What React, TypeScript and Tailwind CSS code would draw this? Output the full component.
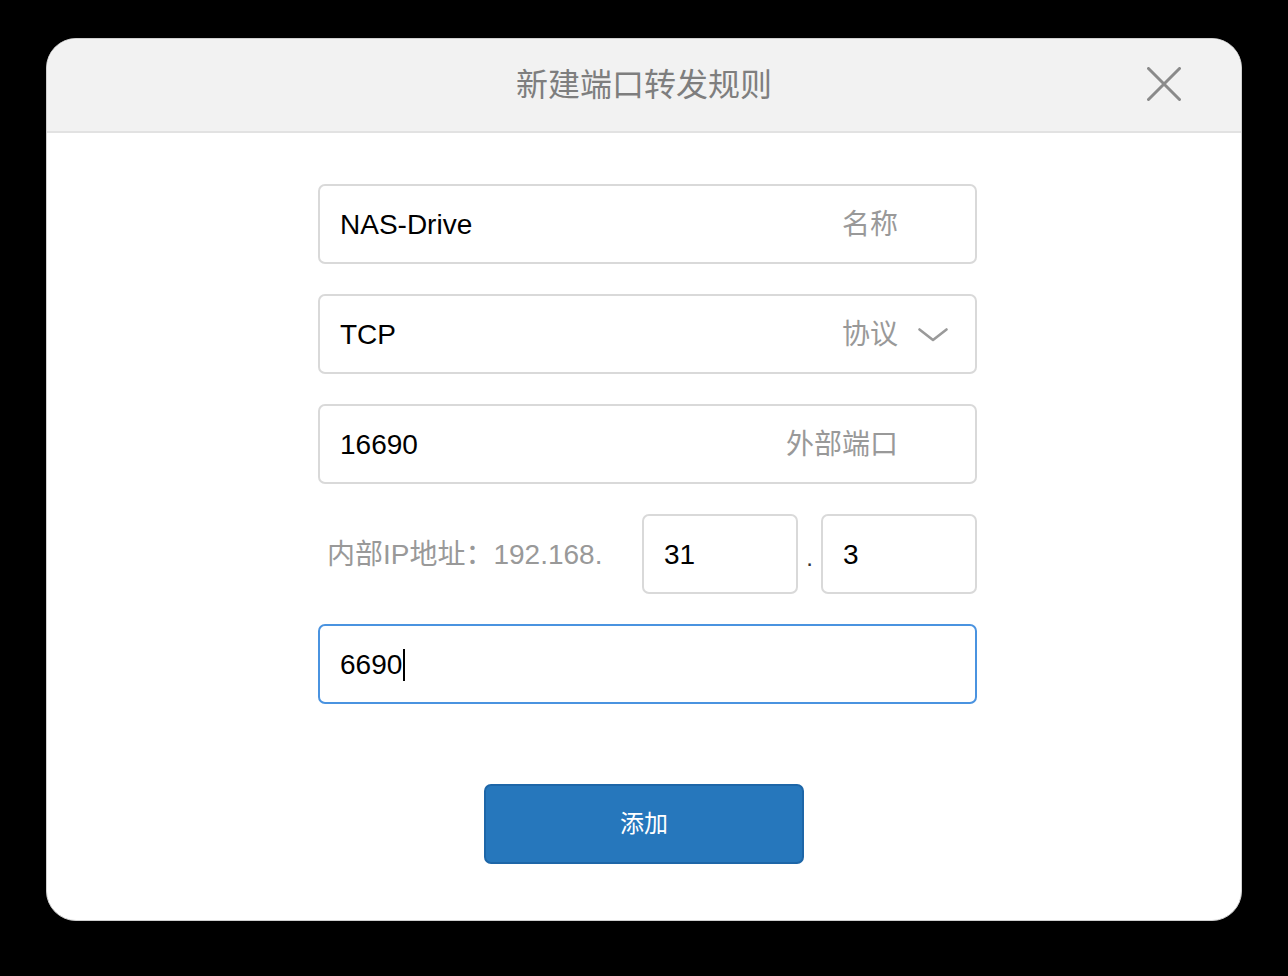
import React from "react";

const LATIN = { fontFamily: '"Liberation Sans", "Noto Sans CJK SC", Arial, sans-serif' };
const CJK = { fontFamily: '"Liberation Sans", "Noto Sans CJK SC", sans-serif' };

function Field({
  value,
  label,
  chevron,
  focused,
}: {
  value: string;
  label?: string;
  chevron?: boolean;
  focused?: boolean;
}) {
  return (
    <div
      className={
        "flex h-[80px] w-[659px] items-center rounded-[7px] border-2 bg-white pl-[20px] pt-[2px] " +
        (focused ? "border-[#4a93e0]" : "border-[#d9d9d9]")
      }
    >
      <div className="flex flex-1 items-center text-[28px] text-black" style={LATIN}>
        <span>{value}</span>
        {focused && <span className="ml-[1px] inline-block h-[32px] w-[2px] bg-black" />}
      </div>
      {label && (
        <span className="text-[28px] text-[#999999]" style={CJK}>
          {label}
        </span>
      )}
      <div className="flex h-full w-[77px] items-center pl-[20px]">
        {chevron && (
          <svg width="30" height="14" viewBox="0 0 30 14" fill="none">
            <path d="M1.5 1.5 L15 12 L28.5 1.5" stroke="#9a9a9a" strokeWidth="2.6" strokeLinecap="round" strokeLinejoin="round" />
          </svg>
        )}
      </div>
    </div>
  );
}

export default function App() {
  return (
    <div className="min-h-[976px] w-full bg-black pt-[38px] pl-[46px]" style={CJK}>
      <div className="flex w-[1196px] flex-col overflow-hidden rounded-[30px] border border-[#cfcfcf] bg-white">
        <div className="relative flex h-[94px] items-center justify-center border-b-2 border-[#e2e2e2] bg-[#f2f2f2]">
          <span className="text-[32px] text-[#7e7e7e]" style={CJK}>
            新建端口转发规则
          </span>
          <svg
            className="absolute right-[60px] top-[28px]"
            width="34"
            height="34"
            viewBox="0 0 34 34"
            fill="none"
          >
            <path d="M1.5 1.5 L32.5 32.5 M32.5 1.5 L1.5 32.5" stroke="#8a8a8a" strokeWidth="3" strokeLinecap="round" />
          </svg>
        </div>
        <div className="flex flex-col pt-[51px] pb-[56px]">
          <div className="ml-[271px] flex flex-col gap-[30px]">
            <Field value="NAS-Drive" label="名称" />
            <Field value="TCP" label="协议" chevron />
            <Field value="16690" label="外部端口" />
            <div className="flex h-[80px] w-[659px] items-center">
              <div className="w-[324px] pl-[9px] pt-[2px] text-[28px] text-[#999999]" style={CJK}>
                内部IP地址：192.168.
              </div>
              <div className="flex h-[80px] w-[156px] items-center rounded-[7px] border-2 border-[#d9d9d9] pl-[20px] pt-[2px] text-[28px] text-black" style={LATIN}>
                31
              </div>
              <div className="flex w-[23px] justify-center pt-[8px] text-[24px] text-[#333]" style={LATIN}>
                .
              </div>
              <div className="flex h-[80px] w-[156px] items-center rounded-[7px] border-2 border-[#d9d9d9] pl-[20px] pt-[2px] text-[28px] text-black" style={LATIN}>
                3
              </div>
            </div>
            <Field value="6690" focused />
          </div>
          <div className="mt-[80px] flex justify-center">
            <button
              className="flex h-[80px] w-[320px] items-center justify-center rounded-[7px] border-2 border-[#1d66a8] bg-[#2677bc] text-[24px] text-white"
              style={CJK}
            >
              添加
            </button>
          </div>
        </div>
      </div>
    </div>
  );
}
